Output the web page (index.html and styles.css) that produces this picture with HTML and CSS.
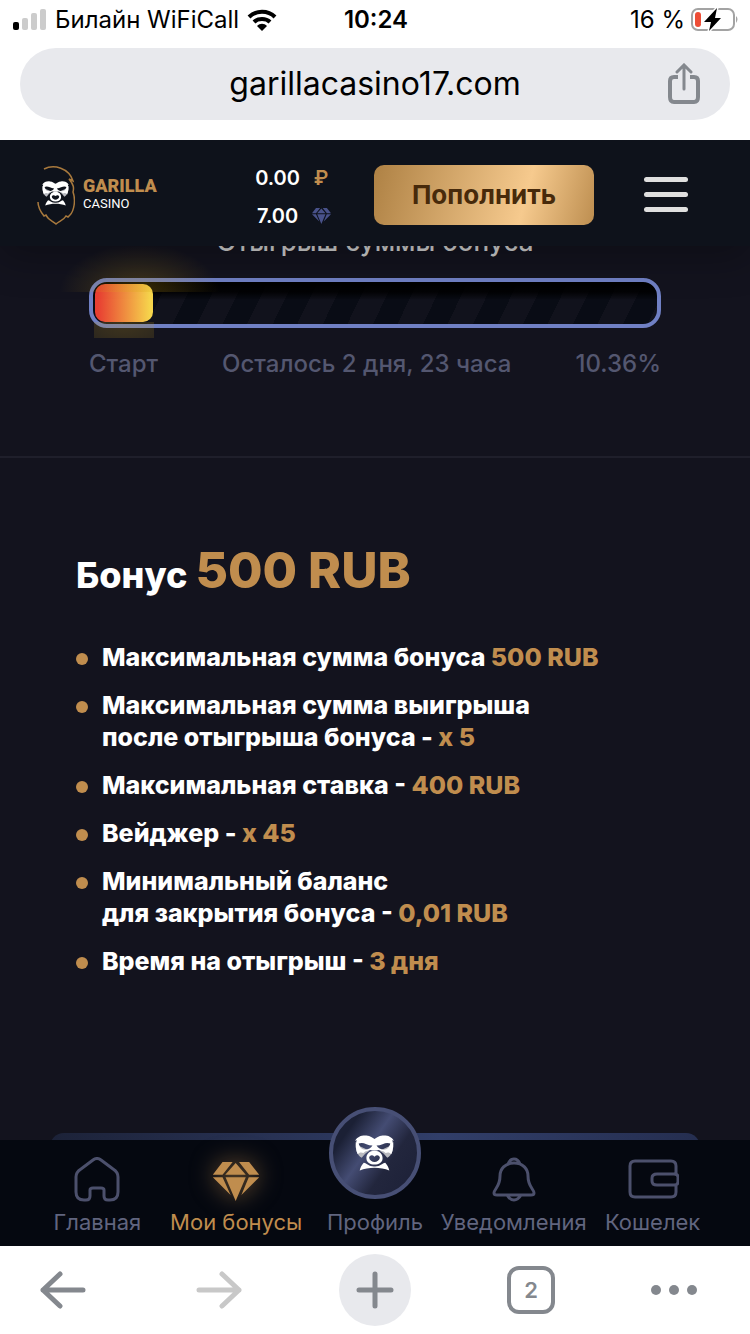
FILE: index.html
```html
<!DOCTYPE html>
<html lang="ru">
<head>
<meta charset="utf-8">
<meta name="viewport" content="width=device-width, initial-scale=1">
<title>Garilla Casino</title>
<link rel="stylesheet" href="styles.css">
</head>
<body>
<svg class="defs" aria-hidden="true">
  <symbol id="face" viewBox="0 0 116 106">
    <path fill="#b9bac0" d="M2 20C0 38 6 60 20 67C27 58 33 51 43 46L16 34ZM114 20C116 38 110 60 96 67C89 58 83 51 73 46L100 34Z"/>
    <path fill="#fff" fill-rule="evenodd" d="M0 17C8 3 20 0 34 1C46 2 52 8 58 11C64 8 70 2 82 1C96 0 108 3 116 17L111 14C115 27 114 44 108 57C103 51 98 50 91 53C84 45 77 47 70 44C64 46 52 46 46 44C39 47 32 45 25 53C18 50 13 51 8 57C2 44 1 27 5 14ZM11 25C14 37 20 43 31 43C40 43 47 39 52 31C39 30 28 23 20 23C16 23 13 24 11 25ZM105 25C103 24 100 23 96 23C88 23 77 30 64 31C69 39 76 43 85 43C96 43 102 37 105 25Z"/>
    <path fill="#fff" fill-rule="evenodd" d="M58 46C73 46 83 56 82 70C81 82 71 87 58 87C45 87 35 82 34 70C33 56 43 46 58 46ZM58 64C51 57 43 60 42 67C43 75 51 79 58 80C65 79 73 75 74 67C73 60 65 57 58 64Z"/>
    <path fill="#fff" d="M26 82C36 84 42 94 58 93C74 94 80 84 90 82C96 88 100 96 102 105C76 94 40 94 14 105C16 96 20 88 26 82Z"/>
  </symbol>
  <symbol id="gem" viewBox="0 0 138 116">
    <path d="M29 0H59L29 38H0ZM78 0H108L138 38H108ZM68 3L98 38H37ZM38 45H98L68 116ZM0 45H29L53 98ZM107 45H138L85 98Z"/>
  </symbol>
</svg>

<div class="status">
  <div class="status-side">
    <svg class="signal" viewBox="0 0 34 22"><rect y="13" width="6" height="8" rx="2"/><g fill="#ccc"><rect x="9" y="9" width="6" height="12" rx="2"/><rect x="18" y="4" width="6" height="17" rx="2"/><rect x="27" width="6" height="21" rx="2"/></g></svg>
    <span>Билайн WiFiCall</span>
    <svg class="wifi" viewBox="0 0 30 22"><g fill="none" stroke="#000" stroke-width="4"><path d="M2 8C9 1 21 1 28 8M7 13C11 9 19 9 23 13"/></g><path d="M10 17C13 14 17 14 20 17L15 22Z"/></svg>
  </div>
  <time class="clock">10:24</time>
  <div class="status-side status-right">
    <span>16 %</span>
    <svg class="battery" viewBox="0 0 48 24"><rect x="1" y="1" width="42" height="21" rx="6" fill="none" stroke="#a3a3a3" stroke-width="2"/><path fill="#a3a3a3" d="M45 8Q48 11 45 15Z"/><rect x="4" y="4" width="6" height="15" rx="3" fill="#ed4d36"/><path d="M26 0L13 14H20L18 23L30 10H24Z" stroke="#fff" stroke-width="3" paint-order="stroke"/></svg>
  </div>
</div>

<div class="address">
  <div class="address-pill">
    <span class="url">garillacasino17.com</span>
    <button class="share" aria-label="Поделиться"><svg viewBox="0 0 34 42" fill="none" stroke="#84888e" stroke-width="4"><path d="M11 14H7Q3 14 3 18V34Q3 39 7 39H27Q31 39 31 34V18Q31 14 27 14H23"/><path d="M17 26V3M10 9L17 2L24 9" stroke-width="3" stroke-linecap="round"/></svg></button>
  </div>
</div>

<header class="site-header">
  <a class="logo" href="#">
    <svg class="logo-mark" viewBox="0 0 38 60"><g fill="none" stroke="#a8793d" stroke-width="1.5"><path d="M7 4C17-1 32 3 36 16L32 14C37 20 37 23 36 27C39 35 37 46 33 50L31 52L29 51C27 55 22 56 19 59C16 56 11 55 9 50L7 51C3 46 1 42 1 37"/></g><use href="#face" x="5" y="16" width="27" height="25"/></svg>
    <span class="logo-words"><b>GARILLA</b><span>CASINO</span></span>
  </a>
  <div class="balances">
    <span>0.00</span><span class="ruble">₽</span>
    <span>7.00</span><svg class="mini-gem"><use href="#gem"/></svg>
  </div>
  <button class="deposit">Пополнить</button>
  <button class="burger" aria-label="Меню"><i></i><i></i><i></i></button>
</header>

<main class="content">
  <section class="wager">
    <h2>Отыгрыш суммы бонуса</h2>
    <div class="bar" role="progressbar" aria-label="Отыгрыш суммы бонуса" aria-valuenow="10.36"><div class="fill" style="width:10.36%"></div></div>
    <div class="labels"><span>Старт</span><span>Осталось 2 дня, 23 часа</span><span>10.36%</span></div>
  </section>
  <section class="bonus">
    <h1>Бонус <strong>500 RUB</strong></h1>
    <ul>
      <li>Максимальная сумма бонуса <em>500 RUB</em></li>
      <li>Максимальная сумма выигрыша<br>после отыгрыша бонуса - <em>x 5</em></li>
      <li>Максимальная ставка - <em>400 RUB</em></li>
      <li>Вейджер - <em>x 45</em></li>
      <li>Минимальный баланс<br>для закрытия бонуса - <em>0,01 RUB</em></li>
      <li>Время на отыгрыш - <em>3 дня</em></li>
    </ul>
  </section>
  <div class="next-card"></div>
</main>

<nav class="tabs">
  <a href="#"><svg viewBox="0 0 52 46" class="tab-icon"><path d="M22 3Q26 0 30 3L42 12Q47 15 47 20V35Q47 43 39 43H37Q33 43 33 39V33Q33 31 30 31H22Q19 31 19 33V39Q19 43 15 43H13Q5 43 5 35V20Q5 15 10 12Z"/></svg>Главная</a>
  <a href="#" class="active"><svg class="tab-icon gem-icon"><use href="#gem" y="5" height="39"/></svg>Мои бонусы</a>
  <a href="#"><span class="avatar"><svg><use href="#face"/></svg></span>Профиль</a>
  <a href="#"><svg viewBox="0 0 52 46" class="tab-icon"><path d="M26 6C35 6 40 12 40 19C40 30 46 32 46 36Q46 38 43 38H9Q6 38 6 36C6 32 12 30 12 19C12 12 17 6 26 6ZM20 7Q22 2 26 2T32 7M19 38Q22 43 26 43T33 38"/></svg>Уведомления</a>
  <a href="#"><svg viewBox="0 0 52 46" class="tab-icon"><path d="M49 17V9Q49 4 44 4H8Q3 4 3 9V35Q3 40 8 40H44Q49 40 49 35V28M30 17H47Q51 17 51 20V25Q51 28 47 28H30Q25 28 25 24V21Q25 17 30 17Z"/></svg>Кошелек</a>
</nav>

<div class="toolbar">
  <button aria-label="Назад"><svg viewBox="0 0 46 38"><path d="M20 3L3 19L20 35M3 19H43"/></svg></button>
  <button aria-label="Вперёд" class="muted"><svg viewBox="0 0 46 38"><path d="M26 3L43 19L26 35M43 19H3"/></svg></button>
  <button aria-label="Новая вкладка" class="plus"><svg viewBox="0 0 46 38"><path d="M23 3V35M7 19H39"/></svg></button>
  <button><span class="count">2</span></button>
  <button aria-label="Ещё" class="more"><svg viewBox="0 0 46 38"><g fill="#84888e"><circle cx="5" cy="19" r="5"/><circle cx="23" cy="19" r="5"/><circle cx="41" cy="19" r="5"/></g></svg></button>
</div>
</body>
</html>
```
FILE: styles.css
```css
* { box-sizing: border-box; }
body {
  margin: 0;
  height: 100vh;
  display: flex;
  flex-direction: column;
  background: #fff;
  color: #000;
  font-family: Inter, "Noto Sans", sans-serif;
  overflow: hidden;
}
button { border: 0; padding: 0; background: none; font: inherit; color: inherit; }
a { color: inherit; text-decoration: none; }
svg { display: block; flex: none; }
.defs { position: absolute; width: 0; height: 0; }

.status {
  display: grid;
  grid-template-columns: 1fr auto 1fr;
  align-items: center;
  height: 40px;
  padding: 0 11px 0 13px;
  font-size: 24px;
  line-height: 32px;
  flex: none;
}
.status-side { display: flex; align-items: center; gap: 8px; white-space: nowrap; }
.status-right { justify-content: flex-end; gap: 6px; }
.signal { width: 34px; height: 22px; }
.wifi { width: 30px; height: 22px; }
.battery { width: 48px; height: 24px; }
.clock { font-weight: 600; }

.address {
  flex: none;
  padding: 8px 20px 20px;
  background: #fff;
  position: relative;
  z-index: 3;
}
.address-pill {
  display: grid;
  grid-template-columns: 34px 1fr 34px;
  align-items: center;
  height: 72px;
  padding: 0 29px;
  border-radius: 36px;
  background: #e8e9ed;
}
.url { grid-column: 2; text-align: center; font-size: 32px; line-height: 40px; }
.share svg { width: 34px; height: 42px; }

.site-header {
  display: flex;
  align-items: center;
  flex: none;
  height: 106px;
  padding: 3px 62px 0 37px;
  background: #0e121b;
  color: #fff;
  box-shadow: 0 10px 40px rgba(0, 0, 0, .3);
  position: relative;
  z-index: 2;
}
.logo { display: flex; align-items: center; gap: 8px; }
.logo-mark { width: 38px; height: 60px; }
.logo-words {
  display: flex;
  flex-direction: column;
  font-family: Roboto, sans-serif;
  font-size: 13px;
  line-height: 18px;
}
.logo-words b { font-size: 18px; font-weight: 900; color: #c08d4e; }
.balances {
  display: grid;
  grid-template-columns: auto 20px;
  column-gap: 11px;
  align-items: center;
  justify-items: center;
  margin-left: auto;
  padding-top: 5px;
  font-size: 20px;
  line-height: 38px;
  font-weight: 600;
}
.ruble { color: #c08d4e; }
.mini-gem { width: 19px; height: 16px; fill: #49528a; }
.deposit {
  width: 220px;
  height: 60px;
  margin: 0 50px 0 43px;
  border-radius: 10px;
  background: linear-gradient(105deg, #ae8144 0%, #f6ca8e 68%, #bd8e50 100%);
  color: #472a0b;
  font-size: 26px;
  font-weight: 700;
}
.burger { display: flex; flex-direction: column; gap: 10px; width: 44px; }
.burger i { height: 5px; border-radius: 3px; background: #dfdfdf; }

.content {
  flex: 1 1 0;
  min-height: 0;
  overflow: hidden;
  background: #13131e;
  color: #fff;
}
.wager { margin-top: -20px; padding: 0 89px 76px; border-bottom: 2px solid #1f1f2b; }
.wager h2 {
  margin: 0 0 20px;
  color: #d0d0d0;
  text-align: center;
  font-size: 26px;
  line-height: 32px;
  font-weight: 500;
}
.bar {
  height: 50px;
  padding: 2px;
  border: 4px solid #7080c4;
  border-radius: 18px;
  background:
    linear-gradient(#000 0, rgba(0, 0, 0, .8) 10px, rgba(0, 0, 0, 0) 18px),
    repeating-linear-gradient(116deg, #090c15 0, #090c15 22px, #11121c 22px, #11121c 45px);
}
.fill {
  position: relative;
  height: 100%;
  border-radius: 10px;
  background: linear-gradient(90deg, #e83f32 5%, #f6d54c 95%);
}
.fill::before {
  content: "";
  position: absolute;
  left: -60px;
  right: -100px;
  bottom: 30px;
  height: 46px;
  background: radial-gradient(ellipse 80px 48px at 48% 100%, rgba(220, 170, 20, .25), transparent);
}
.fill::after {
  content: "";
  position: absolute;
  left: -1px;
  right: -1px;
  top: 38px;
  height: 16px;
  background: radial-gradient(ellipse 50px 30px at 50% 0, rgba(200, 160, 30, .25), rgba(200, 160, 30, .12));
}
.labels {
  display: flex;
  justify-content: space-between;
  margin-top: 20px;
  color: #545770;
  font-size: 24px;
  line-height: 32px;
  font-weight: 500;
}
.bonus { padding: 82px 76px 156px; }
.bonus h1 { margin: 0 0 36px; font-size: 36px; line-height: 60px; font-weight: 800; }
.bonus strong { font-size: 50px; font-weight: 800; color: #c08d4e; }
.bonus ul {
  display: flex;
  flex-direction: column;
  gap: 16px;
  margin: 0;
  padding: 0;
  list-style: none;
  font-size: 25px;
  line-height: 32px;
  font-weight: 800;
}
.bonus li { position: relative; padding-left: 26px; }
.bonus li::before {
  content: "";
  position: absolute;
  left: 0;
  top: 12px;
  width: 12px;
  height: 12px;
  border-radius: 50%;
  background: #c08d4e;
}
.bonus em { font-style: normal; color: #c08d4e; }
.next-card {
  height: 60px;
  margin: 0 50px;
  border-radius: 14px;
  background: linear-gradient(90deg, #1c2238, #313e69 60%, #252e50);
}

.tabs {
  display: grid;
  grid-template-columns: repeat(5, 1fr);
  grid-template-rows: 100%;
  flex: none;
  height: 106px;
  padding: 0 28px;
  background: #050810;
  color: #61657f;
  font-size: 22px;
  line-height: 24px;
  position: relative;
  z-index: 1;
}
.tabs a {
  display: flex;
  flex-direction: column;
  align-items: center;
  justify-content: flex-end;
  gap: 7px;
  min-width: 0;
  padding-bottom: 12px;
  white-space: nowrap;
}
.tabs .active { color: #c08d4e; }
.tab-icon { width: 52px; height: 46px; fill: none; stroke: #4c506c; stroke-width: 3; }
.gem-icon { fill: #c08d4e; stroke: none; overflow: visible; filter: drop-shadow(0 0 12px rgba(192, 141, 78, .65)); }
.avatar {
  display: grid;
  place-items: center;
  flex: none;
  width: 92px;
  height: 92px;
  margin-bottom: 4px;
  border: 4px solid #474f75;
  border-radius: 50%;
  background: linear-gradient(125deg, #1b2035 20%, #444c73 43%, #22263d 65%, #1c2037);
}
.avatar svg { width: 39px; height: 36px; }

.toolbar {
  display: flex;
  justify-content: space-between;
  align-items: center;
  flex: none;
  height: 88px;
  padding: 0 27px;
}
.toolbar button { display: grid; place-items: center; width: 72px; height: 72px; border-radius: 50%; }
.toolbar svg { width: 46px; height: 38px; fill: none; stroke: #84888e; stroke-width: 5; stroke-linecap: round; stroke-linejoin: round; }
.toolbar g { stroke: none; }
.toolbar .muted svg { stroke: #c8c8c8; }
.toolbar .plus { background: #e8e9ed; }
.toolbar .more { justify-items: start; }
.count {
  width: 48px;
  height: 48px;
  border: 4px solid #84888e;
  border-radius: 12px;
  color: #84888e;
  font-size: 22px;
  line-height: 40px;
  font-weight: 600;
}
```
